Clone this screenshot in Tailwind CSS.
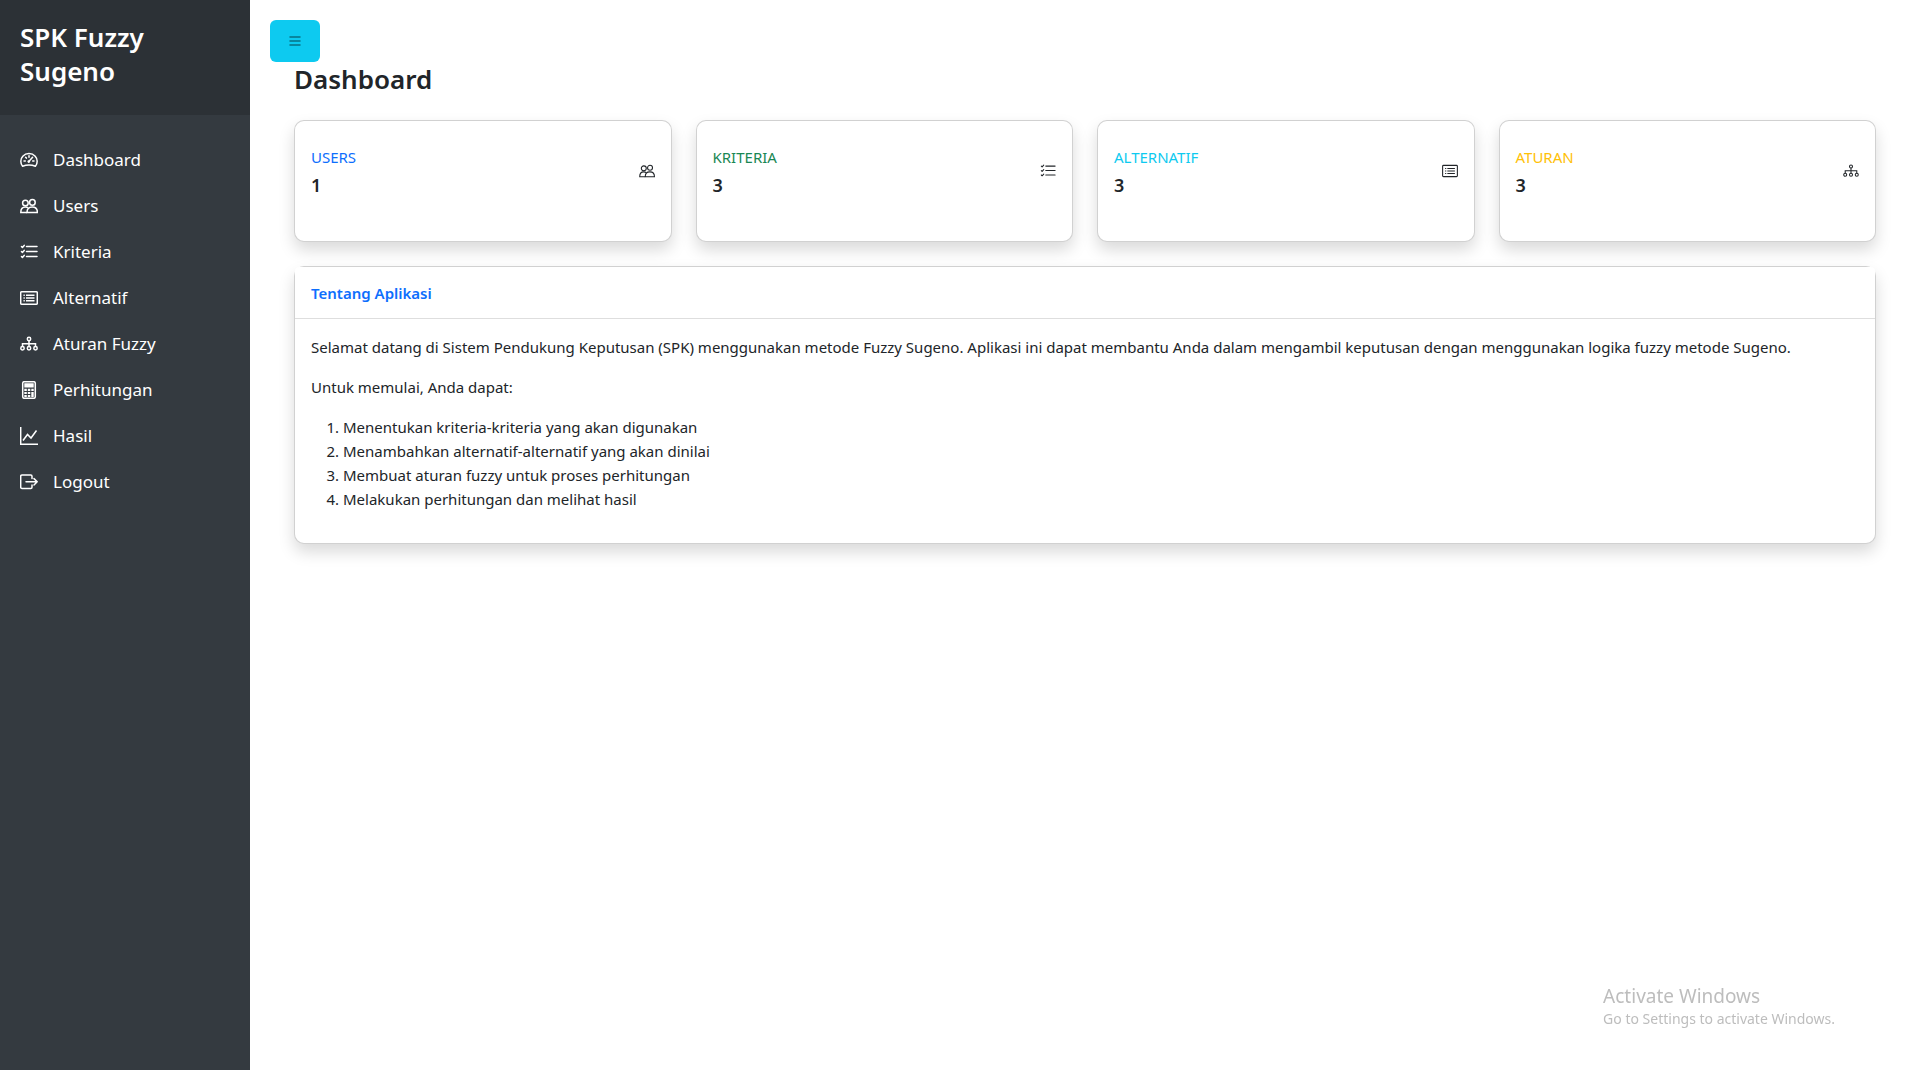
<!DOCTYPE html>
<html lang="id">
<head>
    <meta charset="UTF-8">
    <meta name="viewport" content="width=device-width, initial-scale=1.0">
    <title>Dashboard - SPK Fuzzy Sugeno</title>
    <script src="https://cdn.jsdelivr.net/npm/@tailwindcss/browser@4"></script>
</head>
<body class="bg-white text-[#212529] text-[15px] leading-6 font-['Noto_Sans','Open_Sans',sans-serif]">
    <!-- Icons -->
    <svg class="hidden" aria-hidden="true">
        <symbol id="icon-dashboard" viewBox="0 0 18 18">
            <g fill="none" stroke="currentColor" stroke-linecap="round">
                <path d="M2.6 15.2C.2 12.3.2 8 2.8 5.2a8.4 8.4 0 0 1 12.4 0c2.6 2.8 2.6 7.1.2 10-2-.8-4.1-1.2-6.4-1.2s-4.400.4-6.4 1.200z"/>
                <path d="M9 4.800v1.400M5.600 6.200l.8.9M4 10h1.300M12.700 10H14M8.600 10.800l4-4.600"/>
            </g>
            <circle cx="8.8" cy="10.6" r="1.3" fill="currentColor"/>
        </symbol>
        <symbol id="icon-users" viewBox="0 0 18 18">
            <g fill="none" stroke="currentColor">
                <circle cx="5.4" cy="6" r="2.8"/>
                <circle cx="12.4" cy="5.4" r="2.8"/>
                <path d="M7 15.400H.8c0-3.200 1.600-5.400 4.600-5.400 1 0 1.900.2 2.600.6"/>
                <path d="M7 15.400c0-3.400 2-5.400 5.200-5.400s5.200 2 5.200 5.400z"/>
            </g>
        </symbol>
        <symbol id="icon-list" viewBox="0 0 18 18">
            <g fill="none" stroke="currentColor" stroke-linecap="round" stroke-linejoin="round">
                <path d="M6.500 3.500H17M6.500 8.500H17M6.500 13.500H17"/>
                <path d="M1.500 3.500l.9.900 1.800-2M1.500 8.500l.9.900 1.800-2M1.500 13.500l.9.900 1.800-2"/>
            </g>
        </symbol>
        <symbol id="icon-card" viewBox="0 0 18 18">
            <g fill="none" stroke="currentColor">
                <rect x=".7" y="2.700" width="16.600" height="12.600" rx="1"/>
                <path d="M6 6.200h8.500M6 9h8.500M6 11.800h8.500M3.500 6.200h1.300M3.500 9h1.300M3.500 11.800h1.300"/>
            </g>
        </symbol>
        <symbol id="icon-diagram" viewBox="0 0 18 18">
            <g fill="none" stroke="currentColor">
                <circle cx="9" cy="4" r="1.700"/>
                <circle cx="2.500" cy="13.300" r="1.700"/>
                <circle cx="9" cy="13.300" r="1.700"/>
                <circle cx="15.500" cy="13.300" r="1.700"/>
                <path d="M9 5.700v5.900M2.500 11.600V8.700h13v2.900"/>
            </g>
        </symbol>
        <symbol id="icon-calculator" viewBox="0 0 18 18">
            <rect x="2.700" y=".7" width="12.600" height="16.600" rx="1.500" fill="none" stroke="currentColor"/>
            <path fill="currentColor" d="M4.300 2.300h9.400v4.200H4.300zM4.300 7.700h2.500v2.300H4.300zM7.800 7.700h2.500v2.300H7.800zM11.300 7.700h2.400v2.300h-2.400zM4.300 10.900h2.500v2.200H4.300zM7.800 10.900h2.500v2.200H7.800zM11.300 10.900h2.400V16h-2.400zM4.300 14h2.500v2H4.300zM7.800 14h2.500v2H7.800z"/>
        </symbol>
        <symbol id="icon-graph" viewBox="0 0 18 18">
            <path fill="none" stroke="currentColor" d="M.7 0v17.300H18M3 13.500l4.500-6 3.500 3.500 5.500-7.500"/>
        </symbol>
        <symbol id="icon-logout" viewBox="0 0 18 18">
            <path fill="none" stroke="currentColor" stroke-linecap="round" stroke-linejoin="round" d="M12 5.500V3.300c0-.8-.4-1.200-1.200-1.200H1.900C1.100 2.100.7 2.500.7 3.300v10.900c0 .8.4 1.200 1.200 1.200h8.900c.8 0 1.200-.4 1.200-1.200V12M6 8.800h11.200M14 5.600l3.200 3.200L14 12"/>
        </symbol>
        <symbol id="icon-menu" viewBox="0 0 12 12">
            <path fill="none" stroke="currentColor" stroke-width="1.500" stroke-linecap="round" d="M1 2h10M1 6h10M1 10h10"/>
        </symbol>
    </svg>

    <div class="flex min-h-screen">
        <!-- Sidebar -->
        <nav class="w-[250px] shrink-0 bg-[#343a40] text-white">
            <div class="bg-[#2c3136] px-5 pt-5 pb-[27px]">
                <h3 class="text-[26px] leading-[34px] font-semibold">SPK Fuzzy Sugeno</h3>
            </div>
            <ul class="pt-[22px] text-[17px] leading-[26px]">
                <li><a href="#" class="flex items-center gap-[15px] px-5 py-2.5 hover:bg-[#495057]"><svg class="size-[18px] stroke-[1.500]"><use href="#icon-dashboard"/></svg>Dashboard</a></li>
                <li><a href="#" class="flex items-center gap-[15px] px-5 py-2.5 hover:bg-[#495057]"><svg class="size-[18px] stroke-[1.500]"><use href="#icon-users"/></svg>Users</a></li>
                <li><a href="#" class="flex items-center gap-[15px] px-5 py-2.5 hover:bg-[#495057]"><svg class="size-[18px] stroke-[1.500]"><use href="#icon-list"/></svg>Kriteria</a></li>
                <li><a href="#" class="flex items-center gap-[15px] px-5 py-2.5 hover:bg-[#495057]"><svg class="size-[18px] stroke-[1.500]"><use href="#icon-card"/></svg>Alternatif</a></li>
                <li><a href="#" class="flex items-center gap-[15px] px-5 py-2.5 hover:bg-[#495057]"><svg class="size-[18px] stroke-[1.500]"><use href="#icon-diagram"/></svg>Aturan Fuzzy</a></li>
                <li><a href="#" class="flex items-center gap-[15px] px-5 py-2.5 hover:bg-[#495057]"><svg class="size-[18px] stroke-[1.500]"><use href="#icon-calculator"/></svg>Perhitungan</a></li>
                <li><a href="#" class="flex items-center gap-[15px] px-5 py-2.5 hover:bg-[#495057]"><svg class="size-[18px] stroke-[1.500]"><use href="#icon-graph"/></svg>Hasil</a></li>
                <li><a href="#" class="flex items-center gap-[15px] px-5 py-2.5 hover:bg-[#495057]"><svg class="size-[18px] stroke-[1.500]"><use href="#icon-logout"/></svg>Logout</a></li>
            </ul>
        </nav>

        <!-- Content -->
        <main class="min-w-0 flex-1 p-5">
            <button type="button" aria-label="Menu" class="flex h-[42px] w-[50px] items-center justify-center rounded-md bg-[#0dcaf0] text-black/45">
                <svg class="size-3"><use href="#icon-menu"/></svg>
            </button>

            <div class="pl-6 pr-[9px]">
                <h1 class="mb-6 text-[26px] leading-[34px] font-semibold">Dashboard</h1>

                <!-- Summary cards -->
                <div class="mb-6 grid grid-cols-4 gap-6">
                    <div class="flex items-center justify-between rounded-[10px] border border-black/18 bg-white px-4 pt-6 pb-11 shadow-[0_8px_16px_rgba(0,0,0,0.15)]">
                        <div>
                            <div class="mb-1 uppercase text-[#0d6efd]">Users</div>
                            <div class="text-lg leading-6 font-semibold">1</div>
                        </div>
                        <svg class="size-4 stroke-[1.200]"><use href="#icon-users"/></svg>
                    </div>
                    <div class="flex items-center justify-between rounded-[10px] border border-black/18 bg-white px-4 pt-6 pb-11 shadow-[0_8px_16px_rgba(0,0,0,0.15)]">
                        <div>
                            <div class="mb-1 uppercase text-[#198754]">Kriteria</div>
                            <div class="text-lg leading-6 font-semibold">3</div>
                        </div>
                        <svg class="size-4 stroke-[1.200]"><use href="#icon-list"/></svg>
                    </div>
                    <div class="flex items-center justify-between rounded-[10px] border border-black/18 bg-white px-4 pt-6 pb-11 shadow-[0_8px_16px_rgba(0,0,0,0.15)]">
                        <div>
                            <div class="mb-1 uppercase text-[#0dcaf0]">Alternatif</div>
                            <div class="text-lg leading-6 font-semibold">3</div>
                        </div>
                        <svg class="size-4 stroke-[1.200]"><use href="#icon-card"/></svg>
                    </div>
                    <div class="flex items-center justify-between rounded-[10px] border border-black/18 bg-white px-4 pt-6 pb-11 shadow-[0_8px_16px_rgba(0,0,0,0.15)]">
                        <div>
                            <div class="mb-1 uppercase text-[#ffc107]">Aturan</div>
                            <div class="text-lg leading-6 font-semibold">3</div>
                        </div>
                        <svg class="size-4 stroke-[1.200]"><use href="#icon-diagram"/></svg>
                    </div>
                </div>

                <!-- About -->
                <div class="rounded-[10px] border border-black/18 bg-white shadow-[0_8px_16px_rgba(0,0,0,0.15)]">
                    <div class="rounded-t-sm border-b border-black/13 bg-white px-4 pt-3.5 pb-[13px]">
                        <h6 class="font-semibold text-[#0d6efd]">Tentang Aplikasi</h6>
                    </div>
                    <div class="p-4">
                        <p class="mb-4">Selamat datang di Sistem Pendukung Keputusan (SPK) menggunakan metode Fuzzy Sugeno. Aplikasi ini dapat membantu Anda dalam mengambil keputusan dengan menggunakan logika fuzzy metode Sugeno.</p>
                        <p class="mb-4">Untuk memulai, Anda dapat:</p>
                        <ol class="mb-4 list-decimal pl-8">
                            <li>Menentukan kriteria-kriteria yang akan digunakan</li>
                            <li>Menambahkan alternatif-alternatif yang akan dinilai</li>
                            <li>Membuat aturan fuzzy untuk proses perhitungan</li>
                            <li>Melakukan perhitungan dan melihat hasil</li>
                        </ol>
                    </div>
                </div>
            </div>
        </main>
    </div>

    <!-- Watermark -->
    <div class="pointer-events-none fixed right-[70px] bottom-[41px] text-[#bdbdbd]">
        <div class="text-[19px] leading-[26px]">Activate Windows</div>
        <div class="text-sm leading-5">Go to Settings to activate Windows.</div>
    </div>
</body>
</html>
